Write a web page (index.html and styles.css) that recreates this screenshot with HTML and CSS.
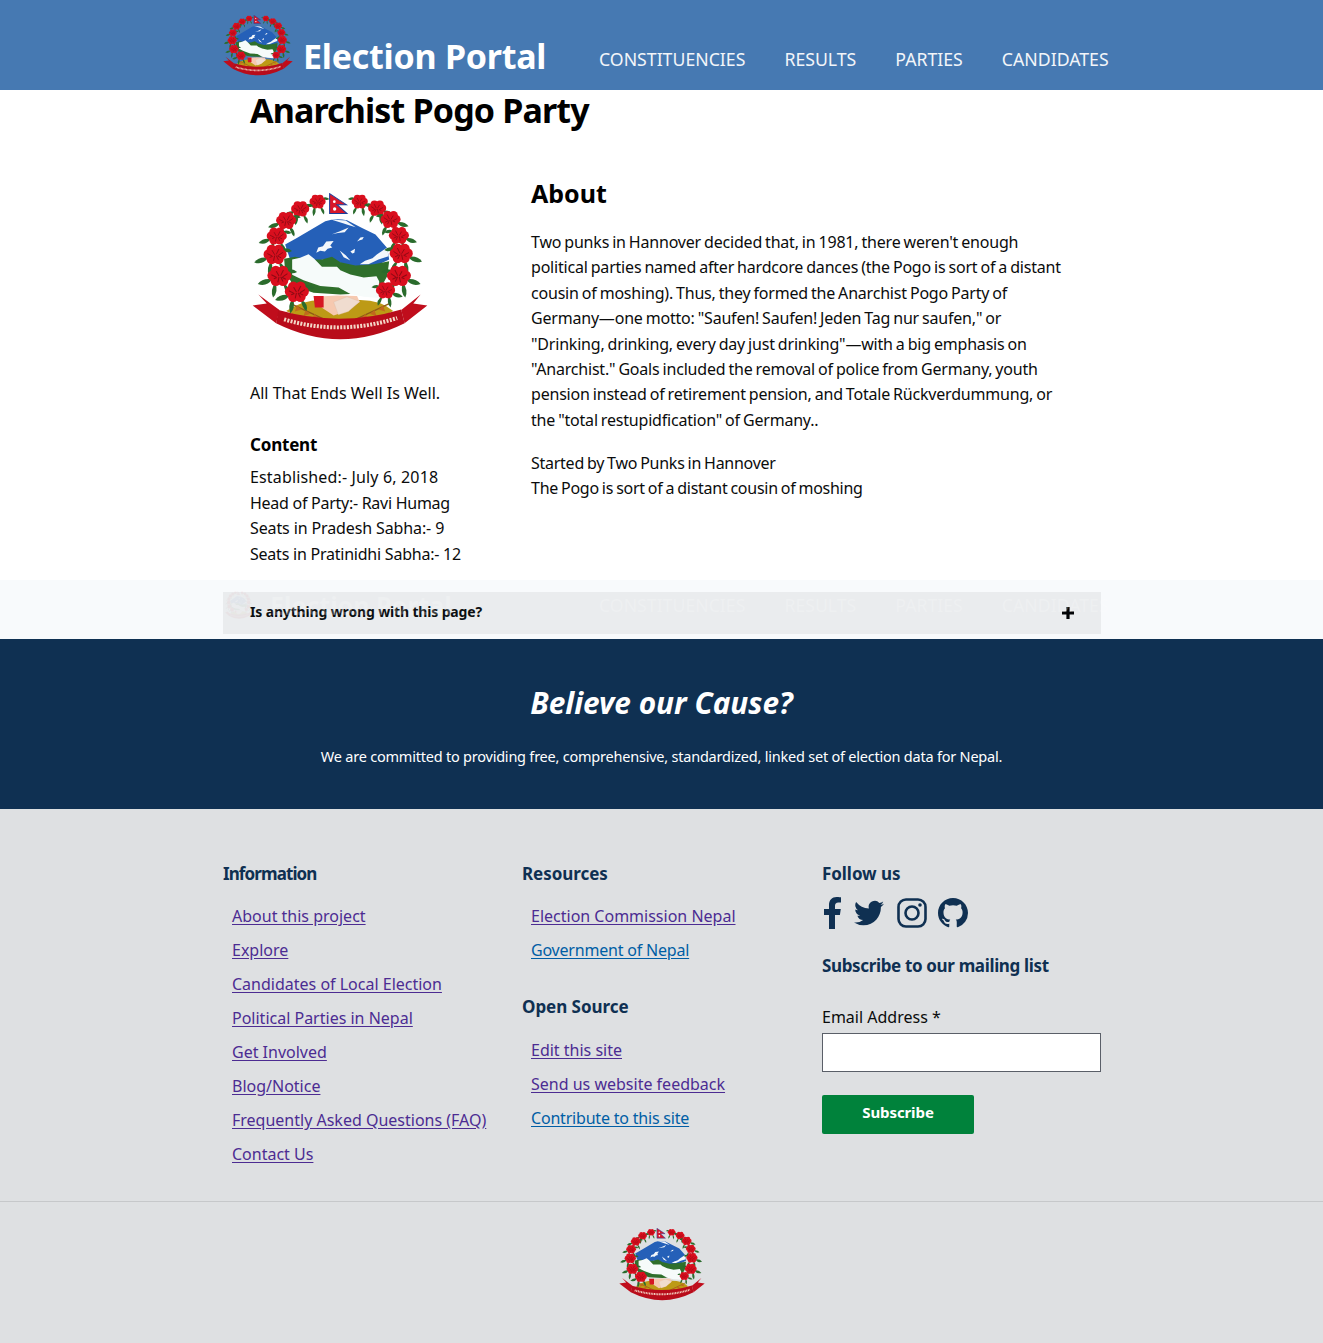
FILE: index.html
```html
<!DOCTYPE html>
<html lang="en">
<head>
<meta charset="utf-8">
<title>Anarchist Pogo Party - Election Portal</title>
<link rel="stylesheet" href="styles.css">
</head>
<body>
<svg class="defs" width="0" height="0" aria-hidden="true">
  <defs>
    <g id="rose">
      <g fill="#2a6b2c">
        <path d="M-18 6Q-42 2-54 18-32 26-18 6z"/>
        <path d="M-10 14Q-24 32-16 52-2 38-10 14z"/>
        <path d="M10 16Q12 36 24 46 30 28 10 16z"/>
        <path d="M18-16Q32-24 44-12 30-4 18-16z"/>
      </g>
      <g fill="#d90f1e">
        <circle cx="-17" cy="-3" r="13"/><circle cx="17" cy="-3" r="13"/>
        <circle cx="-9" cy="-15" r="13"/><circle cx="9" cy="-15" r="13"/>
        <circle cx="-9" cy="10" r="13"/><circle cx="9" cy="10" r="13"/>
        <circle cx="0" cy="-2" r="12"/>
      </g>
      <path d="M-20-5l12 6M20-8L8 0M-4 14l3-14M9 12L3 0M-8-14l7 12M10-17L3-3M-14 5l8-3M16 6L6 1" stroke="#8c0a14" stroke-width="2.500" fill="none"/>
    </g>
    <symbol id="emblem" viewBox="36 40 526 445" preserveAspectRatio="none">
      <path d="M135 195L170 175 255 125Q285 115 320 122L365 145 405 165 440 205 446 240 400 262 350 270 300 250 250 240 200 250 150 240Z" fill="#2560b8"/>
      <path d="M272 120l44 3 30 20-20-6-18-6zM275 164l22-8 28-12-12 14-20 2zM228 220l6-16 14-4 10-14 22-2-10 14 6 6-14 4-8 8-14-2zM298 213l18 14 14 16-20-10zM350 186l10-12 10-2-4 8-8 2zM330 216l14-8-2 12-6 2zM358 254l16-10 22-8 14-12 30-20 4 26-30 10-30 14z" fill="#f4f8fc"/>
      <path d="M132 238L165 232 205 240 245 240 275 232 300 248 345 258 400 254 446 245 440 290 418 330 400 340 300 345 220 340 160 320 135 275Z" fill="#2f6f2b"/>
      <path d="M156 240L180 235 205 224 222 238 245 262 290 262 300 272 330 285 370 294 408 290 416 305 416 356 370 352 330 344 295 324 240 320 190 302 156 286Z" fill="#f6fbfa"/>
      <path d="M138 395Q190 362 240 362L360 362Q420 362 458 395L400 425Q300 450 200 425Z" fill="#bd9a16"/>
      <path d="M222 352L290 348 350 350 358 368 320 395 280 408 245 385Z" fill="#f6c9b0"/>
      <path d="M220 350h30v34h-26z" fill="#d61622"/>
      <path d="M280 368l40-16 38 14-34 30-30 10z" fill="#f0dccf" stroke="#d8b8a4"/>
      <g stroke="#8f5a17" stroke-width="4" fill="#c06a1c">
        <path d="M150 372l120 56M448 372l-120 56"/>
        <path d="M170 378l-6 18 20-6zM196 392l-6 18 20-6zM222 404l-6 18 20-6zM428 378l6 18-20-6zM402 392l6 18-20-6zM376 404l6 18-20-6z" stroke="none"/>
      </g>
      <path d="M38 378L80 372 55 345 118 392 108 432Z" fill="#c00d1c"/>
      <path d="M560 378L518 372 540 345 482 392 492 432Z" fill="#c00d1c"/>
      <path d="M115 392Q300 445 482 390L492 432Q300 528 108 432Z" fill="#b80c1a"/>
      <path d="M132 420Q300 470 470 416" fill="none" stroke="#f4d6c6" stroke-width="12" stroke-dasharray="6 4"/>
      <path d="M268 42L318 75 290 75 320 102 268 102Z" fill="#d8172a" stroke="#1b3f9c" stroke-width="3"/>
      <circle cx="282" cy="66" r="4" fill="#fff"/><circle cx="283" cy="88" r="5" fill="#fff"/>
      <use href="#rose" transform="translate(232 68) scale(.8)"/>
      <use href="#rose" transform="translate(358 68) scale(-.8 .8)"/>
      <use href="#rose" transform="translate(180 90) scale(.9)"/>
      <use href="#rose" transform="translate(410 88) scale(-.9 .9)"/>
      <use href="#rose" transform="translate(138 125)"/>
      <use href="#rose" transform="translate(450 122) scale(-1 1)"/>
      <use href="#rose" transform="translate(110 172)"/>
      <use href="#rose" transform="translate(475 170) scale(-1 1)"/>
      <use href="#rose" transform="translate(105 228) scale(1.150)"/>
      <use href="#rose" transform="translate(482 225) scale(-1.150 1.150)"/>
      <use href="#rose" transform="translate(118 292) scale(1.200)"/>
      <use href="#rose" transform="translate(475 292) scale(-1.200 1.200)"/>
      <use href="#rose" transform="translate(170 340) scale(1.200)"/>
      <use href="#rose" transform="translate(435 335) scale(-.950 .950)"/>
    </symbol>
  </defs>
</svg>

<header class="site-header">
  <div class="wrap header-row">
    <svg class="logo" aria-hidden="true"><use href="#emblem"/></svg>
    <a class="brand" href="#">Election Portal</a>
    <nav class="nav">
      <a href="#">CONSTITUENCIES</a>
      <a href="#">RESULTS</a>
      <a href="#">PARTIES</a>
      <a href="#">CANDIDATES</a>
    </nav>
  </div>
</header>

<main class="wrap page">
  <h1 class="title">Anarchist Pogo Party</h1>
  <div class="cols">
    <aside class="side">
      <svg class="party-logo" aria-hidden="true"><use href="#emblem"/></svg>
      <p class="slogan">All That Ends Well Is Well.</p>
      <h3 class="side-head">Content</h3>
      <ul class="facts">
        <li>Established:- July 6, 2018</li>
        <li>Head of Party:- Ravi Humag</li>
        <li>Seats in Pradesh Sabha:- 9</li>
        <li>Seats in Pratinidhi Sabha:- 12</li>
      </ul>
    </aside>
    <section class="about">
      <h2 class="about-head">About</h2>
      <p class="para">Two punks in Hannover decided that, in 1981, there weren't enough political parties named after hardcore dances (the Pogo is sort of a distant cousin of moshing). Thus, they formed the Anarchist Pogo Party of Germany—one motto: "Saufen! Saufen! Jeden Tag nur saufen," or "Drinking, drinking, every day just drinking"—with a big emphasis on "Anarchist." Goals included the removal of police from Germany, youth pension instead of retirement pension, and Totale Rückverdummung, or the "total restupidfication" of Germany..</p>
      <p class="para">Started by Two Punks in Hannover<br>The Pogo is sort of a distant cousin of moshing</p>
    </section>
  </div>
</main>

<div class="report-band">
  <div class="report">
    <span class="report-text">Is anything wrong with this page?</span>
    <svg class="plus" viewBox="0 0 12 12" aria-hidden="true"><path d="M4.400 0h3.200v4.400H12v3.200H7.600V12H4.400V7.600H0V4.400h4.400z"/></svg>
  </div>
  <div class="ghost" aria-hidden="true">
    <div class="wrap ghost-row">
      <svg class="ghost-logo"><use href="#emblem"/></svg>
      <span class="ghost-brand">Election Portal</span>
      <span class="ghost-nav">
        <span>CONSTITUENCIES</span><span>RESULTS</span><span>PARTIES</span><span>CANDIDATES</span>
      </span>
    </div>
  </div>
</div>

<section class="cause">
  <h2 class="cause-head">Believe our Cause?</h2>
  <p class="cause-text">We are committed to providing free, comprehensive, standardized, linked set of election data for Nepal.</p>
</section>

<footer class="foot">
  <div class="wrap foot-cols">
    <div class="foot-col">
      <h3 class="foot-head info">Information</h3>
      <ul class="links">
        <li><a class="v" href="#">About this project</a></li>
        <li><a class="v" href="#">Explore</a></li>
        <li><a class="v" href="#">Candidates of Local Election</a></li>
        <li><a class="v" href="#">Political Parties in Nepal</a></li>
        <li><a class="v" href="#">Get Involved</a></li>
        <li><a class="v" href="#">Blog/Notice</a></li>
        <li><a class="v" href="#">Frequently Asked Questions (FAQ)</a></li>
        <li><a class="v" href="#">Contact Us</a></li>
      </ul>
    </div>
    <div class="foot-col">
      <h3 class="foot-head">Resources</h3>
      <ul class="links">
        <li><a class="v" href="#">Election Commission Nepal</a></li>
        <li><a class="b" href="#">Government of Nepal</a></li>
      </ul>
      <h3 class="foot-head open">Open Source</h3>
      <ul class="links">
        <li><a class="v" href="#">Edit this site</a></li>
        <li><a class="v" href="#">Send us website feedback</a></li>
        <li><a class="b" href="#">Contribute to this site</a></li>
      </ul>
    </div>
    <div class="foot-col">
      <h3 class="foot-head">Follow us</h3>
      <div class="social">
        <svg class="fb" viewBox="0 0 18 32"><path d="M5 32V18H0v-6h5V8c0-5 3-8 7.600-8 2.200 0 4.400.3 4.400.3v5.200h-2.700C12 5.500 11 7 11 8.800V12h5.800l-.9 6H11v14z"/></svg>
        <svg class="tw" viewBox="0 0 24 24"><path d="M24 4.600a10 10 0 0 1-2.800.8 5 5 0 0 0 2.200-2.700 10 10 0 0 1-3.100 1.200 4.900 4.900 0 0 0-8.400 4.500A14 14 0 0 1 1.700 3.200a4.900 4.900 0 0 0 1.500 6.600 4.900 4.900 0 0 1-2.200-.6c0 2.400 1.700 4.400 3.900 4.900a5 5 0 0 1-2.200.1 4.900 4.900 0 0 0 4.600 3.400A9.900 9.900 0 0 1 0 19.600a14 14 0 0 0 7.500 2.200c9.100 0 14.300-7.700 14-14.600A10 10 0 0 0 24 4.600z"/></svg>
        <svg class="ig" viewBox="0 0 30 30"><rect x="1.500" y="1.500" width="27" height="27" rx="7.500" fill="none" stroke="currentColor" stroke-width="2.600"/><circle cx="15" cy="15" r="6.500" fill="none" stroke="currentColor" stroke-width="2.600"/><circle cx="23" cy="7" r="1.800"/></svg>
        <svg class="gh" viewBox="0 0 16 16"><path d="M8 0C3.580 0 0 3.580 0 8c0 3.540 2.290 6.530 5.470 7.590.4.070.55-.17.55-.38 0-.19-.01-.82-.01-1.490-2.010.37-2.530-.49-2.690-.94-.09-.23-.48-.94-.82-1.130-.28-.15-.68-.52-.01-.53.630-.01 1.080.58 1.230.82.720 1.210 1.870.87 2.330.66.070-.52.280-.87.510-1.070-1.780-.2-3.640-.89-3.640-3.950 0-.87.310-1.590.82-2.150-.08-.2-.36-1.020.08-2.120 0 0 .67-.21 2.200.82.640-.18 1.320-.27 2-.27s1.360.09 2 .27c1.530-1.040 2.200-.82 2.200-.82.440 1.100.16 1.920.08 2.120.51.560.82 1.270.82 2.150 0 3.070-1.870 3.750-3.650 3.950.29.250.54.730.54 1.480 0 1.070-.01 1.930-.01 2.200 0 .21.150.46.550.38A8.010 8.010 0 0 0 16 8c0-4.420-3.580-8-8-8z"/></svg>
      </div>
      <h3 class="foot-head sub">Subscribe to our mailing list</h3>
      <form class="sub-form">
        <label class="sub-label" for="email">Email Address *</label>
        <input class="sub-input" id="email" type="email">
        <button class="sub-btn" type="button">Subscribe</button>
      </form>
    </div>
  </div>
  <div class="foot-bottom">
    <svg class="foot-logo" aria-hidden="true"><use href="#emblem"/></svg>
  </div>
</footer>
</body>
</html>
```

FILE: styles.css
```css
* { box-sizing: border-box; }
html, body { margin: 0; padding: 0; }
body {
  font-family: "Noto Sans", "Liberation Sans", sans-serif;
  font-size: 16px;
  color: #0b0c0c;
  background: #fff;
  position: relative;
}
.defs { position: absolute; }
.wrap { width: 878px; margin-left: 223px; }
h1, h2, h3, p, ul { margin: 0; padding: 0; }
ul { list-style: none; }

.site-header { background: #4679b2; height: 90px; }
.header-row { display: flex; align-items: flex-start; }
.logo { width: 70px; height: 61px; margin-top: 15px; flex: none; }
.brand {
  margin: 33px 0 0 10px;
  width: 296px;
  flex: none;
  font-size: 34px;
  line-height: 46px;
  font-weight: 700;
  letter-spacing: -.25px;
  color: #fff;
  text-decoration: none;
  white-space: nowrap;
}
.nav { display: flex; gap: 39px; margin-top: 46px; }
.nav a { color: #f2f5f9; text-decoration: none; font-size: 17.700px; line-height: 26px; white-space: nowrap; }

.page { padding: 0 27px; height: 490px; }
.title { font-size: 34px; line-height: 40px; font-weight: 700; color: #000; letter-spacing: -.85px; }
.cols { display: grid; grid-template-columns: 281px 543px; margin-top: 42px; }
.party-logo { display: block; width: 176px; height: 148px; margin: 21px 0 0 2px; }
.slogan { margin-top: 39px; line-height: 26px; }
.side-head { margin-top: 26px; font-size: 17px; line-height: 26px; font-weight: 700; color: #000; letter-spacing: -.2px; }
.facts { margin-top: 7px; }
.facts li { line-height: 25.600px; }
.facts li:nth-child(1) { letter-spacing: .15px; }
.facts li:nth-child(2) { letter-spacing: -.27px; }
.facts li:nth-child(3) { letter-spacing: -.12px; }
.facts li:nth-child(4) { letter-spacing: -.23px; }
.about-head { font-size: 25px; line-height: 34px; font-weight: 700; color: #000; margin-top: 4px; }
.para { max-width: 541px; line-height: 25.400px; letter-spacing: -.2px; word-spacing: -.9px; }
.about-head + .para { margin-top: 20px; }
.para + .para { margin-top: 18px; line-height: 25px; letter-spacing: -.26px; }

.report-band { position: relative; height: 59px; padding-top: 12px; background: #fff; }
.report {
  width: 878px; height: 42px; margin-left: 223px;
  background: #f1f1f1;
  display: flex; align-items: center; justify-content: space-between;
  padding: 0 27px;
}
.report-text { font-size: 14px; font-weight: 700; letter-spacing: -.15px; line-height: 40px; height: 42px; }
.plus { width: 12px; height: 12px; fill: #000; }
.ghost {
  position: absolute; inset: 0;
  background: rgba(70,121,178,.035);
  overflow: hidden;
  color: rgba(255,255,255,.22);
  pointer-events: none;
}
.ghost-row { display: flex; align-items: center; height: 50px; padding-left: 2px; }
.ghost-logo { width: 28px; height: 28px; margin: 0 17px 0 0; opacity: .04; flex: none; }
.ghost-brand { width: 329px; font-size: 25px; font-weight: 700; white-space: nowrap; flex: none; }
.ghost-nav { display: flex; gap: 39px; font-size: 17.700px; white-space: nowrap; }

.cause { background: #0f3052; height: 170px; text-align: center; color: #fff; padding-top: 45px; }
.cause-head { font-size: 29.800px; line-height: 38px; font-weight: 700; font-style: italic; }
.cause-text { margin-top: 23px; font-size: 14.500px; line-height: 22px; letter-spacing: -.22px; }

.foot { background: #dee0e2; height: 534px; }
.foot-cols { display: grid; grid-template-columns: 299px 300px 279px; padding-top: 52px; height: 392px; }
.foot-head { font-size: 17px; line-height: 26px; font-weight: 700; color: #0f3052; letter-spacing: -.05px; }
.foot-head.info { letter-spacing: -.9px; }
.links { margin-top: 12px; padding-left: 9px; }
.links li { line-height: 34px; height: 34px; }
.links a { text-decoration: underline; text-underline-offset: 2px; font-size: 16px; }
.links a.v { color: #4c2c92; }
.links a.b { color: #005ea5; letter-spacing: -.2px; }
.foot-head.open { margin-top: 27px; }
.open + .links { margin-top: 13px; }
.social { display: flex; align-items: center; margin-top: 10px; height: 32px; color: #0f3052; fill: #0f3052; }
.fb { width: 18px; height: 32px; margin: 0 12px 0 2px; }
.tw { width: 30px; height: 30px; margin-right: 13px; }
.ig { width: 30px; height: 30px; margin-right: 11px; }
.gh { width: 30px; height: 30px; }
.foot-head.sub { margin-top: 24px; letter-spacing: -.35px; }
.sub-form { display: flex; flex-direction: column; align-items: flex-start; margin-top: 26px; }
.sub-label { line-height: 24px; }
.sub-input { width: 279px; height: 39px; border: 1px solid #5a5f68; background: #fff; margin-top: 4px; padding: 0 6px; }
.sub-btn {
  margin-top: 23px; width: 152px; height: 39px;
  background: #00823b; color: #fff; border: 0; border-radius: 2px;
  font: 700 15px/20px "Noto Sans", sans-serif; letter-spacing: -.1px; padding: 0 0 6px;
}
.foot-bottom { border-top: 1px solid #c6c8ca; height: 142px; display: flex; justify-content: center; padding-top: 26px; padding-left: 1px; }
.foot-logo { width: 86px; height: 73px; }
```
